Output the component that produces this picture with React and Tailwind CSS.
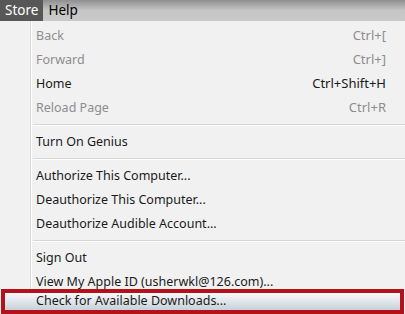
import React from "react";

const Item = ({ label, shortcut, disabled }) => (
  <div className={`flex h-6 items-center pl-[36px] pr-[19px] ${disabled ? "text-[#8d8d8d]" : "text-[#1a1a1a]"}`}>
    <span className="flex-1 text-[12.5px]">{label}</span>
    {shortcut && <span>{shortcut}</span>}
  </div>
);

const Sep = () => (
  <div className="flex h-[10px] flex-col justify-center pl-[33px]">
    <div className="h-px bg-[#d6d6d6]" />
    <div className="h-px bg-white" />
  </div>
);

export default function App() {
  return (
    <div className="relative h-[314px] w-[405px] overflow-hidden bg-[#f1f1f1] text-[13px]" style={{ fontFamily: '"Noto Sans", "Open Sans", sans-serif' }}>
      <div className="flex h-[21px] items-stretch bg-gradient-to-b from-[#8f8f8f] via-[#c6c6c6] to-[#c9c9c9]">
        <div className="flex items-center bg-[#575757] px-[5px] text-[13.5px] text-white">Store</div>
        <div className="flex items-center px-[5px] text-[13.5px] text-black">Help</div>
      </div>
      <div className="relative">
        <div className="absolute left-[30px] top-0 h-[300px] w-px bg-[#d8d8d8]" />
        <div className="absolute left-[31px] top-0 h-[300px] w-px bg-white" />
        <div className="pt-[3px]">
          <Item label="Back" shortcut="Ctrl+[" disabled />
          <Item label="Forward" shortcut="Ctrl+]" disabled />
          <Item label="Home" shortcut="Ctrl+Shift+H" />
          <Item label="Reload Page" shortcut="Ctrl+R" disabled />
          <Sep />
          <Item label="Turn On Genius" />
          <Sep />
          <Item label="Authorize This Computer..." />
          <Item label="Deauthorize This Computer..." />
          <Item label="Deauthorize Audible Account..." />
          <Sep />
          <Item label="Sign Out" />
          <Item label="View My Apple ID (usherwkl@126.com)..." />
          <div className="relative mx-[1px] -mt-[5px] border-4 border-[#b3121a] bg-gradient-to-b from-[#f7f9fb] via-[#e0e6eb] to-[#c7d0d8]">
            <div className="flex h-[17px] items-center pl-[31px] text-[12.5px] text-[#1a1a1a]">Check for Available Downloads...</div>
          </div>
        </div>
      </div>
    </div>
  );
}
